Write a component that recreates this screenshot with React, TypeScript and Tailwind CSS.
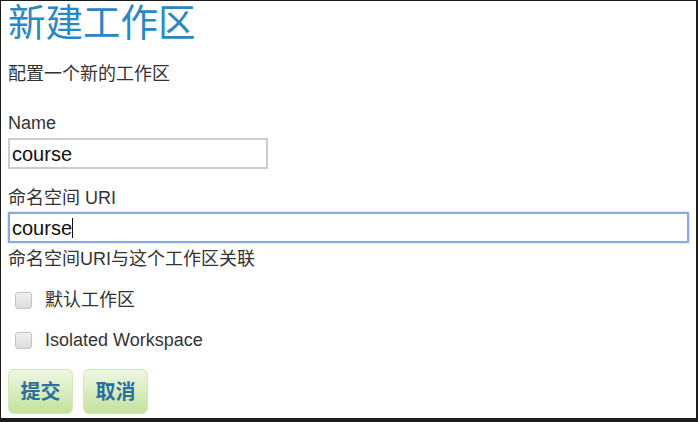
import React from "react";

const sans = { fontFamily: '"Liberation Sans", "Noto Sans CJK SC", sans-serif' };

export default function App() {
  return (
    <div className="w-[698px] h-[422px] bg-[#1c1c1c] pt-px pl-px pr-[2px] pb-[4px] flex">
      <div
        className="flex-1 bg-white pl-[7px] flex flex-col text-[#333333] text-[18px] leading-[24px]"
        style={sans}
      >
        <h1 className="text-[37.5px] leading-[44px] text-[#2a87c2] font-normal">新建工作区</h1>
        <p className="mt-[17px]">配置一个新的工作区</p>
        <label className="mt-[25px]">Name</label>
        <div className="mt-[3px] w-[260px] h-[31px] border-2 border-[#cccccc] flex items-center px-[2px] text-[20px] text-[#111111]">
          course
        </div>
        <label className="mt-[17px]">命名空间 URI</label>
        <div className="mt-[2px] w-[681px] h-[31px] border-2 border-[#86a9e6] shadow-[0_0_2px_#a9c4f2] flex items-center px-[2px] text-[20px] text-[#111111]">
          <span>course</span>
          <span className="w-px h-[20px] bg-[#111111]" />
        </div>
        <p className="mt-[4px]">命名空间URI与这个工作区关联</p>
        <div className="mt-[17px] flex items-center h-[24px]">
          <span className="ml-[7px] w-[17px] h-[17px] rounded-[3px] border border-[#c4c4c4] bg-gradient-to-b from-[#f0f0f0] to-[#dcdcdc]" />
          <span className="ml-[13px]">默认工作区</span>
        </div>
        <div className="mt-[16px] flex items-center h-[24px]">
          <span className="ml-[7px] w-[17px] h-[17px] rounded-[3px] border border-[#c4c4c4] bg-gradient-to-b from-[#f0f0f0] to-[#dcdcdc]" />
          <span className="ml-[13px]">Isolated Workspace</span>
        </div>
        <div className="mt-[17px] flex gap-[10px]">
          <button className="w-[65px] h-[45px] rounded-[6px] border border-[#d2e8b6] bg-gradient-to-b from-[#eef8e2] to-[#c3e29c] text-[#2a6f9f] font-bold text-[20px]">
            提交
          </button>
          <button className="w-[65px] h-[45px] rounded-[6px] border border-[#d2e8b6] bg-gradient-to-b from-[#eef8e2] to-[#c3e29c] text-[#2a6f9f] font-bold text-[20px]">
            取消
          </button>
        </div>
      </div>
    </div>
  );
}
